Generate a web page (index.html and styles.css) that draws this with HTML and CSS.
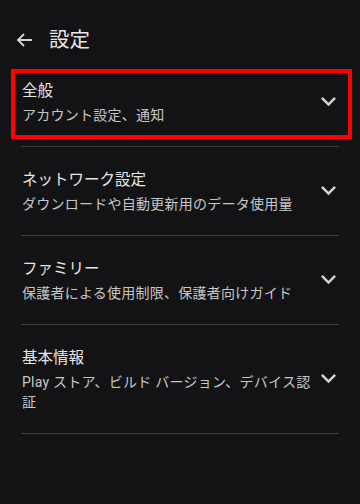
FILE: index.html
```html
<!DOCTYPE html>
<html lang="ja">
<head>
<meta charset="utf-8">
<title>設定</title>
<link rel="stylesheet" href="styles.css">
</head>
<body>
<header class="topbar">
  <svg class="back" width="24" height="24" viewBox="0 0 24 24" aria-hidden="true">
    <path d="M19 12H5.5M11 6L5 12l6 6" fill="none" stroke="currentColor" stroke-width="1.8" stroke-linejoin="miter"/>
  </svg>
  <h1 class="title">設定</h1>
</header>
<main class="list">
  <section class="item focused">
    <div class="text">
      <div class="item-title">全般</div>
      <div class="item-sub">アカウント設定、通知</div>
    </div>
    <svg class="chev" width="15" height="9.3" viewBox="0 0 15 9.3" aria-hidden="true"><path d="M13.24 0L7.5 5.71 1.76 0 0 1.76l7.5 7.5 7.5-7.5z" fill="currentColor"/></svg>
  </section>
  <section class="item">
    <div class="text">
      <div class="item-title">ネットワーク設定</div>
      <div class="item-sub">ダウンロードや自動更新用のデータ使用量</div>
    </div>
    <svg class="chev" width="15" height="9.3" viewBox="0 0 15 9.3" aria-hidden="true"><path d="M13.24 0L7.5 5.71 1.76 0 0 1.76l7.5 7.5 7.5-7.5z" fill="currentColor"/></svg>
  </section>
  <section class="item">
    <div class="text">
      <div class="item-title">ファミリー</div>
      <div class="item-sub">保護者による使用制限、保護者向けガイド</div>
    </div>
    <svg class="chev" width="15" height="9.3" viewBox="0 0 15 9.3" aria-hidden="true"><path d="M13.24 0L7.5 5.71 1.76 0 0 1.76l7.5 7.5 7.5-7.5z" fill="currentColor"/></svg>
  </section>
  <section class="item">
    <div class="text">
      <div class="item-title">基本情報</div>
      <div class="item-sub">Play ストア、ビルド バージョン、デバイス認証</div>
    </div>
    <svg class="chev" width="15" height="9.3" viewBox="0 0 15 9.3" aria-hidden="true"><path d="M13.24 0L7.5 5.71 1.76 0 0 1.76l7.5 7.5 7.5-7.5z" fill="currentColor"/></svg>
  </section>
</main>
</body>
</html>
```
FILE: styles.css
```css
html, body {
  margin: 0;
  padding: 0;
}
body {
  background: #131315;
  color: #e6e6e6;
  font-family: "Roboto", "Noto Sans CJK JP", sans-serif;
  width: 360px;
  min-height: 504px;
}
.topbar {
  display: flex;
  align-items: center;
  height: 32px;
  padding: 24px 0 2px 13px;
}
.back {
  color: #d4d4d4;
  flex: none;
}
.title {
  margin: 0 0 0 12px;
  font-size: 20.5px;
  font-weight: 400;
  line-height: 32px;
  color: #e6e6e6;
}
.list {
  margin: 0 21px;
}
.item {
  position: relative;
  display: flex;
  align-items: center;
  gap: 4px;
  padding: 21px 0;
  border-bottom: 1px solid #3c3c3e;
}
.text {
  flex: 1;
  min-width: 0;
  padding-left: 1px;
}
.item-title {
  font-size: 15.5px;
  line-height: 24px;
  margin-bottom: 2px;
  color: #e6e6e6;
}
.item-sub {
  font-size: 14px;
  line-height: 20px;
  letter-spacing: 0.25px;
  color: #c6c6c6;
}
.chev {
  flex: none;
  color: #d2d2d2;
  margin-right: 3px;
}
.focused::after {
  content: "";
  position: absolute;
  top: 11px;
  bottom: 7px;
  left: -10px;
  right: -13px;
  border: 4px solid #ff0000;
  pointer-events: none;
}
```
